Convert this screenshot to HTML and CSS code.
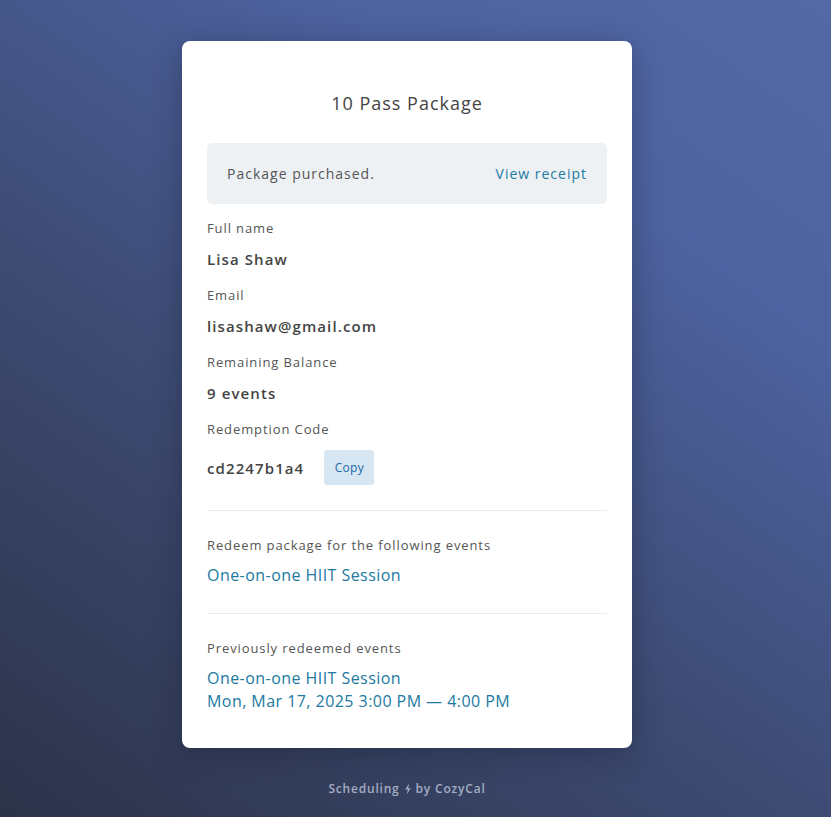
FILE: index.html
```html
<!DOCTYPE html>
<html lang="en">
<head>
<meta charset="utf-8">
<title>10 Pass Package</title>
<link rel="stylesheet" href="styles.css">
</head>
<body>
<main class="page">
  <section class="card">
    <h1 class="title">10 Pass Package</h1>
    <div class="banner">
      <span class="banner-text">Package purchased.</span>
      <a class="link banner-link" href="#">View receipt</a>
    </div>
    <div class="field">
      <div class="label">Full name</div>
      <div class="value">Lisa Shaw</div>
    </div>
    <div class="field">
      <div class="label">Email</div>
      <div class="value">lisashaw@gmail.com</div>
    </div>
    <div class="field">
      <div class="label">Remaining Balance</div>
      <div class="value">9 events</div>
    </div>
    <div class="field">
      <div class="label">Redemption Code</div>
      <div class="code-row">
        <span class="value">cd2247b1a4</span>
        <button class="copy" type="button">Copy</button>
      </div>
    </div>
    <hr class="divider">
    <div class="section">
      <div class="label">Redeem package for the following events</div>
      <a class="link event" href="#">One-on-one HIIT Session</a>
    </div>
    <hr class="divider">
    <div class="section">
      <div class="label">Previously redeemed events</div>
      <a class="link event stacked" href="#">One-on-one HIIT Session<br>Mon, Mar 17, 2025 3:00 PM — 4:00 PM</a>
    </div>
  </section>
  <footer class="footer">Scheduling <svg class="bolt" viewBox="0 0 8 12" width="8" height="12"><path d="M5.2 0.5 L1.2 6.6 L3.9 6.6 L2.6 11.5 L6.8 5.2 L4.1 5.2 Z" fill="currentColor"/></svg> by CozyCal</footer>
</main>
</body>
</html>
```

FILE: styles.css
```css
html, body {
  margin: 0;
  padding: 0;
}
body {
  height: 817px;
  overflow: hidden;
  font-family: "Open Sans", "Noto Sans", sans-serif;
  background: linear-gradient(35deg, #2c3349 0%, #3d4a72 40%, #4d62a0 75%, #5369a6 100%);
  color: #444;
}
.page {
  display: flex;
  flex-direction: column;
  align-items: center;
  padding: 41px 17px 0 0;
}
.card {
  box-sizing: border-box;
  width: 450px;
  background: #fff;
  border-radius: 8px;
  padding: 25px 25px 35px;
  box-shadow: 0 6px 30px rgba(20, 25, 45, 0.35);
  display: flex;
  flex-direction: column;
}
.title {
  margin: 25px 0 28px;
  font-size: 18px;
  line-height: 24px;
  font-weight: 400;
  text-align: center;
  color: #444;
  letter-spacing: 1px;
}
.banner {
  height: 61px;
  box-sizing: border-box;
  padding: 0 20px;
  background: #eef1f4;
  border-radius: 5px;
  display: flex;
  align-items: center;
  justify-content: space-between;
  font-size: 14px;
  letter-spacing: 1px;
}
.banner-text {
  color: #555;
}
.link {
  color: #21799f;
  text-decoration: none;
}
.field {
  display: flex;
  flex-direction: column;
  gap: 10px;
  margin-top: 14px;
}
.field + .field {
  margin-top: 15px;
}
.label {
  font-size: 13px;
  line-height: 20px;
  color: #555;
  letter-spacing: 0.9px;
}
.value {
  font-size: 15px;
  line-height: 22px;
  font-weight: 600;
  color: #444;
  letter-spacing: 1.1px;
}
.code-row {
  display: flex;
  align-items: center;
  gap: 20px;
  margin-top: 1px;
}
.copy {
  width: 50px;
  height: 35px;
  border: none;
  border-radius: 3px;
  background: #d6e7f3;
  color: #1c6aa8;
  font-family: inherit;
  font-size: 12px;
  letter-spacing: 0.3px;
  padding: 0;
}
.divider {
  width: 100%;
  height: 1px;
  border: none;
  background: #ececec;
  margin: 25px 0 0;
}
.section {
  display: flex;
  flex-direction: column;
  gap: 9px;
  margin-top: 24px;
}
.section + .divider {
  margin-top: 27px;
}
.event {
  font-size: 16px;
  line-height: 22px;
  letter-spacing: 0.45px;
}
.stacked {
  line-height: 23px;
}
.footer {
  margin-top: 33px;
  font-size: 12px;
  line-height: 16px;
  font-weight: 600;
  color: #a4acc2;
  display: flex;
  align-items: center;
  gap: 4px;
  letter-spacing: 0.8px;
}
.bolt {
  display: block;
}
```
